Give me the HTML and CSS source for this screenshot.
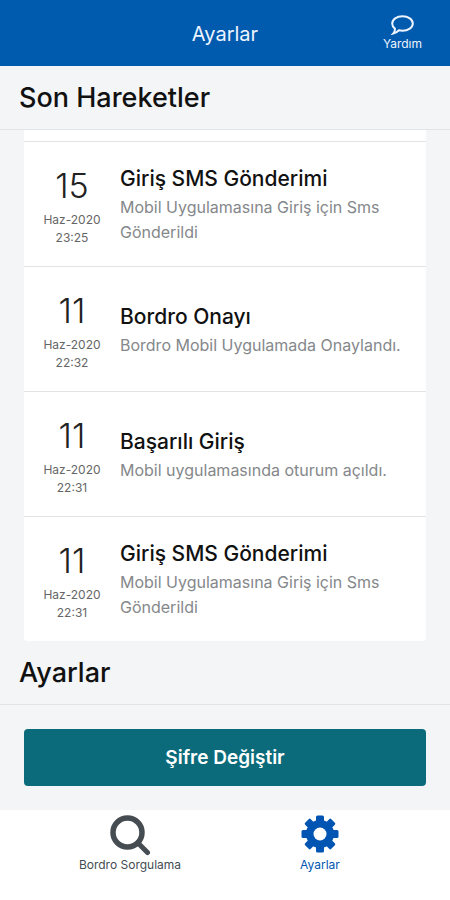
FILE: index.html
```html
<!DOCTYPE html>
<html lang="tr">
<head>
<meta charset="utf-8">
<meta name="viewport" content="width=device-width, initial-scale=1">
<title>Ayarlar</title>
<link rel="stylesheet" href="styles.css">
</head>
<body>
<header class="topbar">
  <h1 class="topbar-title">Ayarlar</h1>
  <a class="help" href="#yardim">
    <svg class="help-icon" viewBox="0 0 24 20" aria-hidden="true"><path d="M12.500 1.200c5.800 0 10.300 3.200 10.300 7.300s-4.600 7.200-10.300 7.200c-1.300 0-2.500-.1-3.600-.4-1.400 1.500-3.200 2.800-5.700 3.300 1.300-1.400 1.900-3 1.700-5-1.700-1.300-2.700-3.100-2.700-5.100C2.200 4.400 6.700 1.200 12.500 1.200z"/></svg>
    <span>Yardım</span>
  </a>
</header>
<main class="content">
  <h2 class="section-title">Son Hareketler</h2>
  <ul class="activity">
    <li class="activity-tail"></li>
    <li class="entry">
      <time class="date" datetime="2020-06-15T23:25"><span class="day">15</span><span>Haz-2020</span><span>23:25</span></time>
      <div class="info"><h3 class="info-title">Giriş SMS Gönderimi</h3><p class="info-text">Mobil Uygulamasına Giriş için Sms Gönderildi</p></div>
    </li>
    <li class="entry">
      <time class="date" datetime="2020-06-11T22:32"><span class="day">11</span><span>Haz-2020</span><span>22:32</span></time>
      <div class="info"><h3 class="info-title">Bordro Onayı</h3><p class="info-text">Bordro Mobil Uygulamada Onaylandı.</p></div>
    </li>
    <li class="entry">
      <time class="date" datetime="2020-06-11T22:31"><span class="day">11</span><span>Haz-2020</span><span>22:31</span></time>
      <div class="info"><h3 class="info-title">Başarılı Giriş</h3><p class="info-text">Mobil uygulamasında oturum açıldı.</p></div>
    </li>
    <li class="entry">
      <time class="date" datetime="2020-06-11T22:31"><span class="day">11</span><span>Haz-2020</span><span>22:31</span></time>
      <div class="info"><h3 class="info-title">Giriş SMS Gönderimi</h3><p class="info-text">Mobil Uygulamasına Giriş için Sms Gönderildi</p></div>
    </li>
  </ul>
  <h2 class="section-title">Ayarlar</h2>
  <div class="actions"><button class="primary" type="button">Şifre Değiştir</button></div>
</main>
<nav class="tabs">
  <a class="tab" href="#bordro">
    <svg class="tab-icon" viewBox="0 0 42 42" aria-hidden="true"><circle cx="18.500" cy="18.500" r="14.500" fill="none" stroke="currentColor" stroke-width="5.500"/><path d="M29 29l9.500 9.500" fill="none" stroke="currentColor" stroke-width="5" stroke-linecap="round"/></svg>
    <span class="tab-label">Bordro Sorgulama</span>
  </a>
  <a class="tab tab-active" href="#ayarlar">
    <svg class="tab-icon" viewBox="0 0 42 42" aria-hidden="true">
      <g fill="currentColor">
        <rect x="17" y="1.500" width="8" height="37" rx="1.500"/>
        <rect x="17" y="1.500" width="8" height="37" rx="1.500" transform="rotate(45 21 20)"/>
        <rect x="17" y="1.500" width="8" height="37" rx="1.500" transform="rotate(90 21 20)"/>
        <rect x="17" y="1.500" width="8" height="37" rx="1.500" transform="rotate(135 21 20)"/>
        <circle cx="21" cy="20" r="14"/>
      </g>
      <circle cx="21" cy="20" r="6.500" fill="#fff"/>
    </svg>
    <span class="tab-label">Ayarlar</span>
  </a>
</nav>
</body>
</html>
```
FILE: styles.css
```css
* { box-sizing: border-box; }

body {
  margin: 0;
  min-height: 100vh;
  display: flex;
  flex-direction: column;
  background: #f3f5f7;
  color: #111;
  font-family: Inter, "Liberation Sans", sans-serif;
}

h1, h2, h3, p, ul { margin: 0; padding: 0; }
a { color: inherit; text-decoration: none; }

.topbar {
  display: grid;
  grid-template-columns: 1fr auto 1fr;
  align-items: center;
  height: 66px;
  padding: 2px 28px 0;
  background: #005aae;
  color: #edf4ff;
}

.topbar-title {
  grid-column: 2;
  font-size: 20px;
  font-weight: 400;
}

.help {
  justify-self: end;
  display: flex;
  flex-direction: column;
  align-items: center;
  font-size: 12px;
  line-height: 18px;
}

.help-icon {
  width: 24px;
  height: 20px;
  fill: none;
  stroke: currentColor;
  stroke-width: 2;
}

.content { flex: 1; }

.section-title {
  padding: 16px 19px 15px;
  border-bottom: 1px solid #e1e5e8;
  font-size: 27px;
  font-weight: 500;
  line-height: 32px;
}

.activity {
  margin: 0 24px;
  background: #fff;
  border-radius: 0 0 3px 3px;
  list-style: none;
}

.activity-tail { height: 11px; }

.entry {
  display: flex;
  align-items: center;
  min-height: 125px;
  padding-top: 2px;
  border-top: 1px solid #e0e4e6;
}

.date {
  flex: none;
  display: flex;
  flex-direction: column;
  width: 96px;
  padding-top: 4px;
  color: #666;
  font-size: 12px;
  line-height: 18px;
  text-align: center;
}

.day {
  margin-bottom: 7px;
  color: #222;
  font-size: 34px;
  font-weight: 300;
  line-height: 36px;
}

.info { padding-right: 16px; }

.info-title {
  margin-bottom: 2px;
  font-size: 21px;
  font-weight: 500;
  line-height: 28px;
}

.info-text {
  color: #85888b;
  font-size: 16px;
  font-weight: 400;
  line-height: 25px;
}

.actions { padding: 24px; }

.primary {
  display: block;
  width: 100%;
  height: 57px;
  border: 0;
  border-radius: 4px;
  background: #0b6b7b;
  color: #fff;
  font: 600 19px Inter, "Liberation Sans", sans-serif;
}

.tabs {
  display: flex;
  height: 90px;
  padding: 0 35px;
  background: #fff;
}

.tab {
  flex: 1;
  display: flex;
  flex-direction: column;
  align-items: center;
  padding-top: 4px;
  color: #454c52;
}

.tab-active { color: #0055b3; }

.tab-icon { width: 42px; height: 42px; }

.tab-label {
  font-size: 12px;
  line-height: 18px;
}
```
